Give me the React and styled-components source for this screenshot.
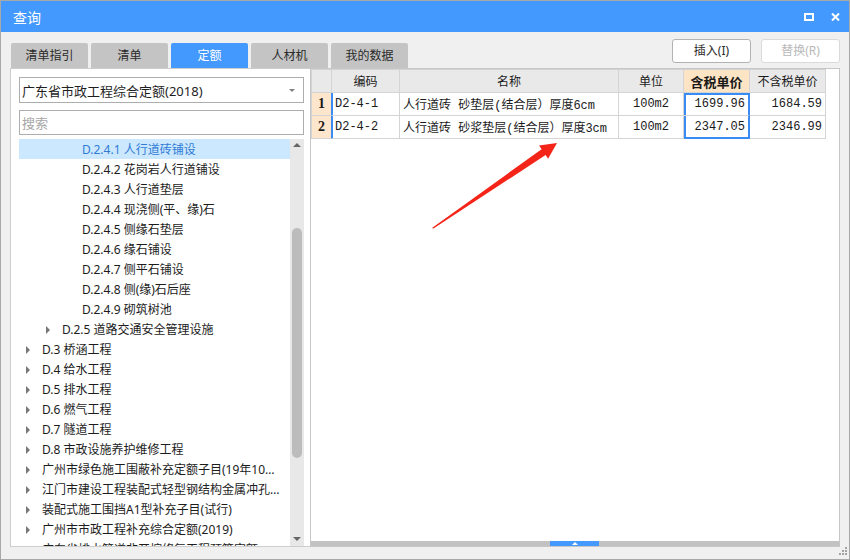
import React from 'react'
import styled, { createGlobalStyle } from 'styled-components'

const GlobalStyle = createGlobalStyle`
  html, body { margin: 0; padding: 0; background: #fff; }
  body { font-family: "Noto Sans", "Noto Sans CJK SC", sans-serif; }
  * { box-sizing: border-box; }
`

const BLUE = '#4499ff'
const FOCUS = '#3b8cf2'

const Window = styled.div`
  position: relative;
  width: 850px;
  height: 560px;
  border: 1px solid #a8a8a8;
  background: #f0f0f0;
  display: flex;
  flex-direction: column;
  overflow: hidden;
`

const TitleBar = styled.div`
  height: 31px;
  flex: none;
  background: ${BLUE};
  color: #fff;
  font-size: 14px;
  display: flex;
  align-items: center;
  padding: 0 9px 0 12px;
  .title { flex: 1; }
  .icons { display: flex; align-items: center; gap: 17px; }
`

const Body = styled.div`
  flex: 1;
  display: flex;
  flex-direction: column;
  padding: 6px 9px 12px;
  min-height: 0;
`

const Toolbar = styled.div`
  height: 30px;
  flex: none;
  display: flex;
  align-items: flex-end;
`

const Tabs = styled.div`
  display: flex;
  gap: 3px;
  flex: 1;
  padding-left: 1px;
`

const Tab = styled.div`
  width: 77px;
  height: 25px;
  line-height: 25px;
  text-align: center;
  font-size: 12px;
  border-radius: 2px 2px 0 0;
  background: ${p => (p.$active ? BLUE : '#c4c4c4')};
  color: ${p => (p.$active ? '#fff' : '#2a2a2a')};
`

const Buttons = styled.div`
  display: flex;
  gap: 10px;
  align-self: flex-start;
  margin-top: 1px;
`

const Button = styled.div`
  width: 79px;
  height: 24px;
  line-height: 22px;
  text-align: center;
  font-size: 12px;
  background: #fff;
  border-radius: 3px;
  border: 1px solid ${p => (p.$disabled ? '#dadada' : '#b3b3b3')};
  color: ${p => (p.$disabled ? '#b9b9b9' : '#2a2a2a')};
`

const Main = styled.div`
  flex: 1;
  display: flex;
  min-height: 0;
`

const LeftPanel = styled.div`
  width: 300px;
  flex: none;
  background: #fff;
  border: 1px solid #cdcdcd;
  border-right: none;
  padding: 8px 6px 0 8px;
  display: flex;
  flex-direction: column;
  min-height: 0;
`

const Select = styled.div`
  height: 26px;
  flex: none;
  border: 1px solid #adadad;
  display: flex;
  align-items: center;
  padding: 0 8px 0 2px;
  font-size: 13px;
  color: #1e1e1e;
  span { flex: 1; }
  i {
    width: 0; height: 0;
    border-left: 3px solid transparent;
    border-right: 3px solid transparent;
    border-top: 3px solid #808080;
  }
`

const Search = styled.input`
  height: 25px;
  flex: none;
  margin-top: 7px;
  border: 1px solid #adadad;
  outline: none;
  padding: 0 2px;
  font-family: "Noto Sans", "Noto Sans CJK SC", sans-serif;
  font-size: 13px;
  &::placeholder { color: #a6a6a6; }
`

const Tree = styled.div`
  flex: 1;
  margin-top: 4px;
  display: flex;
  min-height: 0;
  overflow: hidden;
`

const Rows = styled.div`
  flex: 1;
  min-width: 0;
  overflow: hidden;
`

const Row = styled.div`
  height: 20px;
  display: flex;
  align-items: center;
  font-size: 12px;
  padding-top: 2px;
  padding-left: ${p => 7 + (p.$level - 1) * 20}px;
  padding-right: 10px;
  background: ${p => (p.$selected ? '#cce8ff' : 'transparent')};
  color: ${p => (p.$selected ? '#2f7bd6' : '#1c1c1c')};
`

const Caret = styled.span`
  width: 16px;
  flex: none;
  display: flex;
  align-items: center;
  &::before {
    content: '';
    display: ${p => (p.$show ? 'block' : 'none')};
    width: 0; height: 0;
    border-top: 4px solid transparent;
    border-bottom: 4px solid transparent;
    border-left: 4px solid #777;
  }
`

const Label = styled.span`
  flex: 1;
  min-width: 0;
  white-space: nowrap;
  overflow: hidden;
  text-overflow: ellipsis;
  line-height: 18px;
`

const ScrollTrack = styled.div`
  width: 14px;
  flex: none;
  background: #e8e8e8;
  display: flex;
  flex-direction: column;
  align-items: center;
  padding: 4px 0 5px;
`

const ScrollArrow = styled.i`
  width: 0; height: 0;
  border-left: 4px solid transparent;
  border-right: 4px solid transparent;
  ${p => (p.$down ? 'border-top: 4px solid #666;' : 'border-bottom: 4px solid #666;')}
  ${p => p.$down && 'margin-top: auto;'}
`

const Thumb = styled.div`
  width: 10px;
  height: 230px;
  margin-top: 81px;
  border-radius: 5px;
  background: #bcbcbc;
`

const RightPanel = styled.div`
  flex: 1;
  background: #fff;
  border: 1px solid #c6c6c6;
  display: flex;
  flex-direction: column;
  min-width: 0;
`

const Grid = styled.div`
  display: grid;
  grid-template-columns: 20px 68px 219px 65px 66px 76px;
  width: 515px;
  border-top: 1px solid #d4d4d4;
  border-left: 1px solid #d4d4d4;
`

const Cell = styled.div`
  height: 23px;
  border-right: 1px solid #d4d4d4;
  border-bottom: 1px solid #d4d4d4;
  display: flex;
  align-items: center;
  justify-content: ${p => p.$align || 'flex-start'};
  padding: 0 3px;
  white-space: nowrap;
  overflow: hidden;
  font-size: 12px;
  color: #1a1a1a;
  font-family: "Liberation Mono", "Noto Sans CJK SC", monospace;
  background: #fff;
`

const HeadCell = styled(Cell)`
  justify-content: center;
  font-family: "Noto Sans", "Noto Sans CJK SC", sans-serif;
  font-size: ${p => (p.$hot ? '13px' : '12px')};
  font-weight: ${p => (p.$hot ? 700 : 400)};
  background: ${p => (p.$hot ? '#fde4c4' : '#e9e9e9')};
`

const NumCell = styled(Cell)`
  justify-content: center;
  background: #fde6cb;
  font-family: "Liberation Serif", serif;
  font-weight: 700;
  font-size: 14px;
  border-right-color: ${FOCUS};
`

const CodeCell = styled(Cell)`
  box-shadow: inset 1px 0 0 ${FOCUS};
`

const PriceCell = styled(Cell)`
  justify-content: flex-end;
  ${p => p.$focus && `
    border-right: 2px solid ${FOCUS};
    box-shadow: inset 2px 0 0 ${FOCUS} ${p.$first ? `, inset 0 2px 0 ${FOCUS}` : ''};
    ${p.$last ? `border-bottom: 2px solid ${FOCUS};` : ''}
  `}
`

const HBar = styled.div`
  margin-top: auto;
  height: 5px;
  flex: none;
  background: #c2c2c2;
  display: flex;
`

const Handle = styled.div`
  width: 49px;
  margin-left: 239px;
  background: ${BLUE};
  display: flex;
  justify-content: center;
  align-items: center;
  &::before {
    content: '';
    width: 0; height: 0;
    border-left: 3px solid transparent;
    border-right: 3px solid transparent;
    border-bottom: 3px solid #fff;
  }
`

const Grip = styled.svg`
  position: absolute;
  right: 1px;
  bottom: 3px;
`

const Overlay = styled.svg`
  position: absolute;
  left: -1px;
  top: -1px;
  pointer-events: none;
`

const tree = [
  { level: 3, text: 'D.2.4.1 人行道砖铺设', selected: true },
  { level: 3, text: 'D.2.4.2 花岗岩人行道铺设' },
  { level: 3, text: 'D.2.4.3 人行道垫层' },
  { level: 3, text: 'D.2.4.4 现浇侧(平、缘)石' },
  { level: 3, text: 'D.2.4.5 侧缘石垫层' },
  { level: 3, text: 'D.2.4.6 缘石铺设' },
  { level: 3, text: 'D.2.4.7 侧平石铺设' },
  { level: 3, text: 'D.2.4.8 侧(缘)石后座' },
  { level: 3, text: 'D.2.4.9 砌筑树池' },
  { level: 2, text: 'D.2.5 道路交通安全管理设施', caret: true },
  { level: 1, text: 'D.3 桥涵工程', caret: true },
  { level: 1, text: 'D.4 给水工程', caret: true },
  { level: 1, text: 'D.5 排水工程', caret: true },
  { level: 1, text: 'D.6 燃气工程', caret: true },
  { level: 1, text: 'D.7 隧道工程', caret: true },
  { level: 1, text: 'D.8 市政设施养护维修工程', caret: true },
  { level: 1, text: '广州市绿色施工围蔽补充定额子目(19年10月)', caret: true },
  { level: 1, text: '江门市建设工程装配式轻型钢结构金属冲孔板围挡', caret: true },
  { level: 1, text: '装配式施工围挡A1型补充子目(试行)', caret: true },
  { level: 1, text: '广州市市政工程补充综合定额(2019)', caret: true },
  { level: 1, text: '广东省排水管道非开挖修复工程预算定额', caret: true },
]

const rows = [
  { code: 'D2-4-1', name: '人行道砖 砂垫层(结合层）厚度6cm', unit: '100m2', tax: '1699.96', noTax: '1684.59' },
  { code: 'D2-4-2', name: '人行道砖 砂浆垫层(结合层）厚度3cm', unit: '100m2', tax: '2347.05', noTax: '2346.99' },
]

export default function App() {
  return (
    <>
      <GlobalStyle />
      <Window>
        <TitleBar>
          <span className='title'>查询</span>
          <span className='icons'>
            <svg width='10' height='8' viewBox='0 0 10 8'>
              <rect x='1' y='1' width='8' height='6' fill='none' stroke='#fff' strokeWidth='2' />
            </svg>
            <svg width='9' height='8' viewBox='0 0 9 8'>
              <path d='M1 0.5 L8 7.5 M8 0.5 L1 7.5' stroke='#fff' strokeWidth='2' />
            </svg>
          </span>
        </TitleBar>
        <Body>
          <Toolbar>
            <Tabs>
              <Tab>清单指引</Tab>
              <Tab>清单</Tab>
              <Tab $active>定额</Tab>
              <Tab>人材机</Tab>
              <Tab>我的数据</Tab>
            </Tabs>
            <Buttons>
              <Button>插入(I)</Button>
              <Button $disabled>替换(R)</Button>
            </Buttons>
          </Toolbar>
          <Main>
            <LeftPanel>
              <Select>
                <span>广东省市政工程综合定额(2018)</span>
                <i />
              </Select>
              <Search placeholder='搜索' readOnly />
              <Tree>
                <Rows>
                  {tree.map((t, i) => (
                    <Row key={i} $level={t.level} $selected={t.selected}>
                      <Caret $show={t.caret} />
                      <Label>{t.text}</Label>
                    </Row>
                  ))}
                </Rows>
                <ScrollTrack>
                  <ScrollArrow />
                  <Thumb />
                  <ScrollArrow $down />
                </ScrollTrack>
              </Tree>
            </LeftPanel>
            <RightPanel>
              <Grid>
                <HeadCell />
                <HeadCell>编码</HeadCell>
                <HeadCell>名称</HeadCell>
                <HeadCell>单位</HeadCell>
                <HeadCell $hot>含税单价</HeadCell>
                <HeadCell>不含税单价</HeadCell>
                {rows.map((r, i) => (
                  <React.Fragment key={r.code}>
                    <NumCell>{i + 1}</NumCell>
                    <CodeCell>{r.code}</CodeCell>
                    <Cell>{r.name}</Cell>
                    <Cell $align='center'>{r.unit}</Cell>
                    <PriceCell $focus $first={i === 0} $last={i === rows.length - 1}>{r.tax}</PriceCell>
                    <PriceCell>{r.noTax}</PriceCell>
                  </React.Fragment>
                ))}
              </Grid>
              <HBar>
                <Handle />
              </HBar>
            </RightPanel>
          </Main>
        </Body>
        <Grip width='10' height='9' viewBox='0 0 10 9'>
          <g fill='#a3a3a3'>
            <rect x='7' y='0' width='2' height='2' />
            <rect x='4' y='3' width='2' height='2' />
            <rect x='7' y='3' width='2' height='2' />
            <rect x='1' y='6' width='2' height='2' />
            <rect x='4' y='6' width='2' height='2' />
            <rect x='7' y='6' width='2' height='2' />
          </g>
        </Grip>
        <Overlay width='850' height='560' viewBox='0 0 850 560'>
          <polygon
            points='432,228 541.6,149.2 539.1,145.5 557,143 548.1,158.7 545.6,155 433.5,228.6'
            fill='#f42419'
          />
        </Overlay>
      </Window>
    </>
  )
}
